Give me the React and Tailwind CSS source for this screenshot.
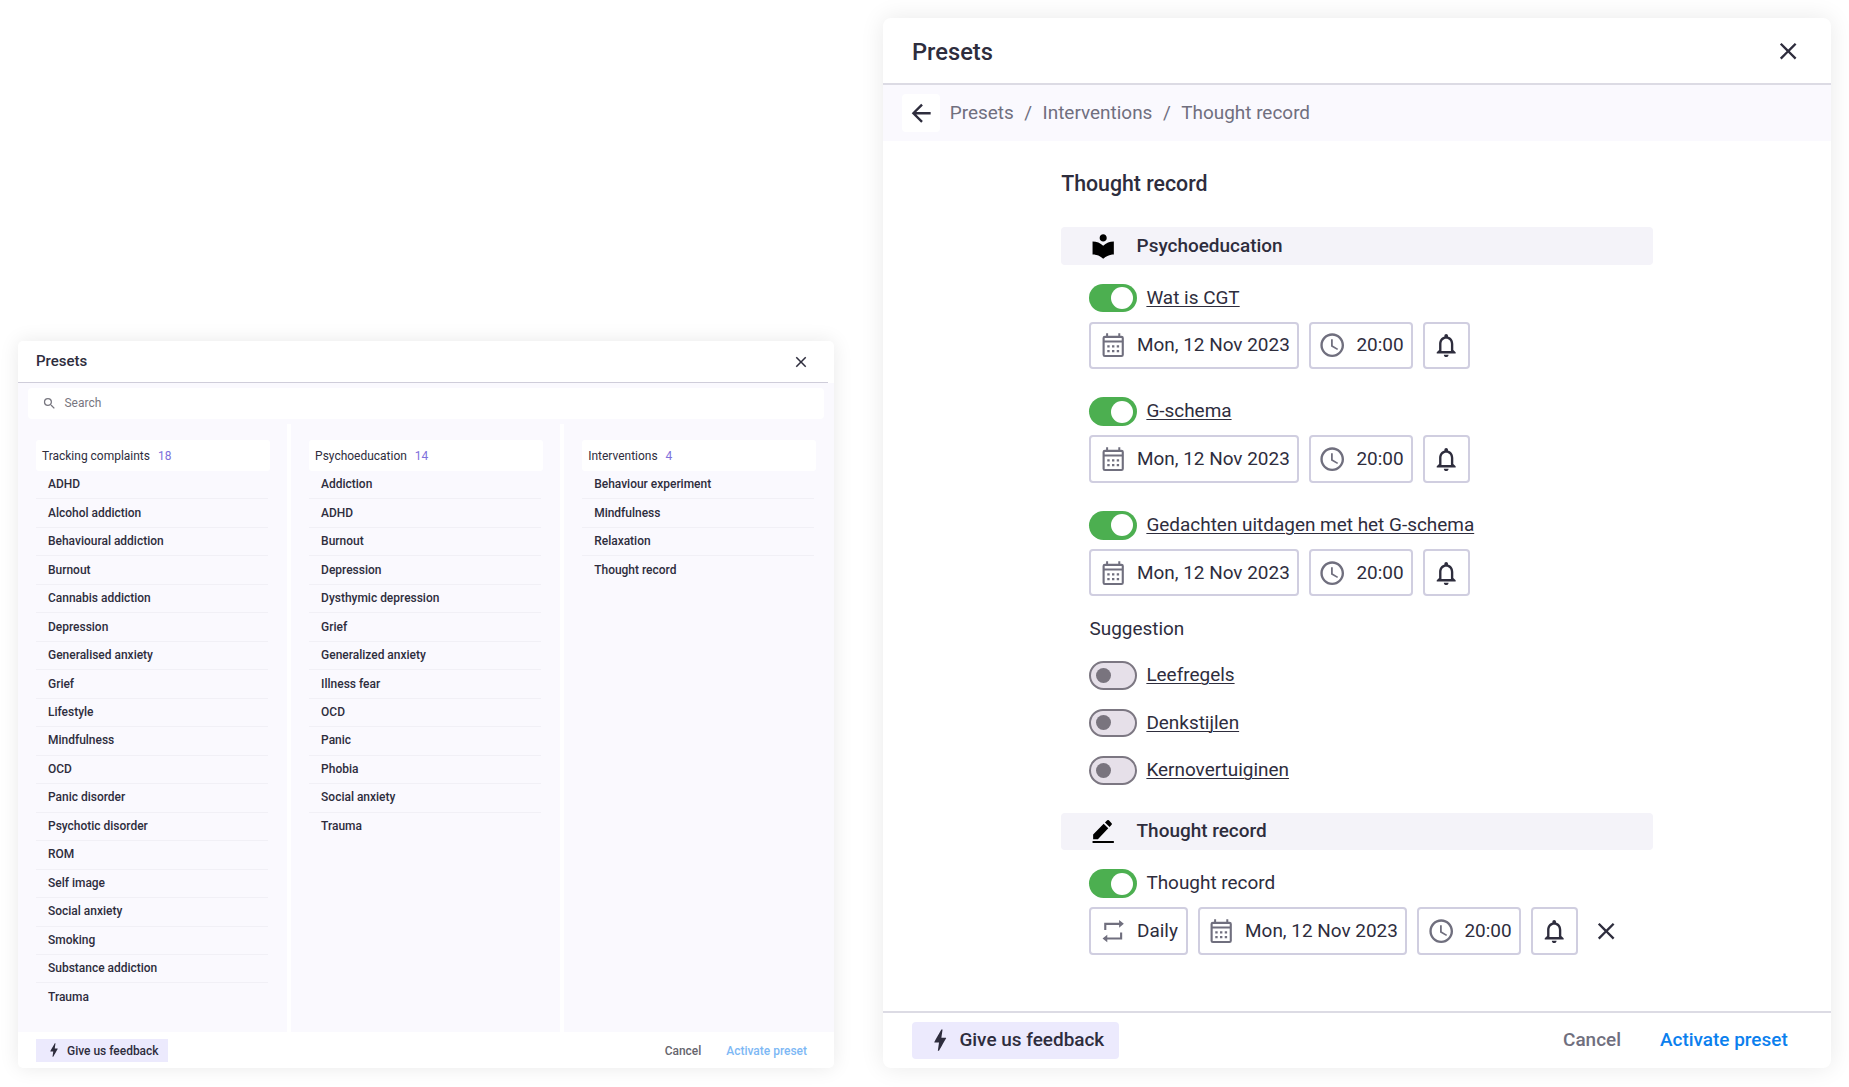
import React, { useState } from "react";
import {
  MdAccessTime,
  MdArrowBack,
  MdBolt,
  MdClose,
  MdLocalLibrary,
  MdNotificationsNone,
  MdSearch,
} from "react-icons/md";

const columns = [
  {
    title: "Tracking complaints",
    count: 18,
    items: [
      "ADHD",
      "Alcohol addiction",
      "Behavioural addiction",
      "Burnout",
      "Cannabis addiction",
      "Depression",
      "Generalised anxiety",
      "Grief",
      "Lifestyle",
      "Mindfulness",
      "OCD",
      "Panic disorder",
      "Psychotic disorder",
      "ROM",
      "Self image",
      "Social anxiety",
      "Smoking",
      "Substance addiction",
      "Trauma",
    ],
  },
  {
    title: "Psychoeducation",
    count: 14,
    items: [
      "Addiction",
      "ADHD",
      "Burnout",
      "Depression",
      "Dysthymic depression",
      "Grief",
      "Generalized anxiety",
      "Illness fear",
      "OCD",
      "Panic",
      "Phobia",
      "Social anxiety",
      "Trauma",
    ],
  },
  {
    title: "Interventions",
    count: 4,
    items: ["Behaviour experiment", "Mindfulness", "Relaxation", "Thought record"],
  },
];

const CalendarIcon = () => (
  <svg viewBox="0 0 24 24" className="size-[28.4px] shrink-0 fill-[#706f7e]">
    <path d="M7 12h2v2H7v-2m14-6v14a2 2 0 0 1-2 2H5a2 2 0 0 1-2-2V6a2 2 0 0 1 2-2h1V2h1.700v2h8.600V2H18v2h1a2 2 0 0 1 2 2M4.800 8h14.400V6H4.800v2m14.400 12.200V9.800H4.800v10.400h14.400M15 14v-2h2v2h-2m-4 0v-2h2v2h-2m-4 2h2v2H7v-2m8 2v-2h2v2h-2m-4 0v-2h2v2h-2Z" />
  </svg>
);

const RepeatIcon = () => (
  <svg viewBox="0 0 24 24" className="size-[28.4px] shrink-0 fill-[#706f7e]">
    <path d="M17 2.600 21 5.800 17 9V6.700H6.200V11H4.400V4.900H17zM7 21.400 3 18.200 7 15v2.300h10.800V13h1.800v6.100H7z" />
  </svg>
);

const PencilIcon = () => (
  <svg viewBox="0 0 24 24" className="size-[28.4px] shrink-0 fill-black">
    <path d="M3 20.200h18V22H3zM3.500 14.800v4h4l8.800-9.200-3.900-3.900zM17.400 8.400l1.700-1.800a1 1 0 0 0 0-1.400l-2.300-2.400a1 1 0 0 0-1.400 0l-1.900 1.800z" />
  </svg>
);

const Toggle = ({ on, onClick }) => (
  <button
    onClick={onClick}
    className={
      on
        ? "flex h-[28.4px] w-[47.4px] items-center justify-end rounded-full bg-[#4caf50] pr-[3.5px]"
        : "flex h-[28.4px] w-[47.4px] items-center rounded-full border-2 border-[#7c7782] bg-[#e6e0e9] pl-[5px]"
    }
  >
    <span className={on ? "size-[22px] rounded-full bg-white" : "size-[15px] rounded-full bg-[#79747e]"} />
  </button>
);

const Field = ({ icon, text, className = "" }) => (
  <div
    className={`flex h-[47.4px] items-center gap-[9.5px] rounded-[4px] border-2 border-[#d0cee0] px-[7.6px] ${className}`}
  >
    {icon}
    {text && <span>{text}</span>}
  </div>
);

const Schedule = ({ daily }) => (
  <div className="mt-[9.5px] flex gap-[9.5px]">
    {daily && <Field icon={<RepeatIcon />} text="Daily" className="w-[98.6px]" />}
    <Field icon={<CalendarIcon />} text="Mon, 12 Nov 2023" />
    <Field icon={<MdAccessTime className="size-[28.4px] text-[#706f7e]" />} text="20:00" />
    <Field icon={<MdNotificationsNone className="size-[28.4px]" />} />
    {daily && (
      <button className="ml-[4.5px] flex items-center">
        <MdClose className="size-[28.4px]" />
      </button>
    )}
  </div>
);

const Item = ({ label, initial = false, link = true, className = "" }) => {
  const [on, setOn] = useState(initial);
  return (
    <div className={`flex h-[28.4px] items-center gap-[9.5px] ${className}`}>
      <Toggle on={on} onClick={() => setOn(!on)} />
      <span className={link ? "underline decoration-1 underline-offset-2" : ""}>{label}</span>
    </div>
  );
};

const SectionBar = ({ icon, title }) => (
  <div className="flex h-[37.6px] items-center gap-[19px] rounded-[4px] bg-[#f4f3f9] pl-[28px] font-medium">
    {icon}
    {title}
  </div>
);

const PresetList = () => (
  <div className="mt-[341px] flex h-[727px] w-[816px] flex-col overflow-hidden rounded-[5px] bg-white text-[11.98px] shadow-[0_0_20px_rgba(0,0,0,0.09)]">
    <header className="mr-[6px] flex h-[42px] shrink-0 items-center justify-between border-b border-[#cfcdda] px-[18px]">
      <h1 className="text-[15px] font-medium">Presets</h1>
      <MdClose className="size-[18px]" />
    </header>
    <div className="h-[41px] shrink-0 bg-[#faf9fe] px-[10px] pt-[5px]">
      <div className="flex h-[31px] items-center gap-[8px] rounded-[4px] bg-white pl-[13.5px] text-[#77767f]">
        <MdSearch className="size-[15px]" />
        Search
      </div>
    </div>
    <div className="flex flex-1 gap-[4.5px]">
      {columns.map((col) => (
        <div key={col.title} className="w-[268.6px] bg-[#faf9fe] pt-[16px] pl-[18px] last:flex-1">
          <div className="flex h-[31px] w-[234px] items-center gap-[8px] rounded-[3px] bg-white pt-[2px] pl-[6px]">
            {col.title}
            <span className="text-[#7f71dc]">{col.count}</span>
          </div>
          {col.items.map((item, i) => (
            <div
              key={item}
              className={`flex h-[28.47px] w-[232px] items-center pt-px pl-[12px] font-medium ${
                i < col.items.length - 1 ? "border-b border-[#f1f0f6]" : ""
              }`}
            >
              {item}
            </div>
          ))}
        </div>
      ))}
    </div>
    <footer className="flex h-[36px] shrink-0 items-center pr-[27px] pl-[18px] font-medium">
      <button className="flex h-[23px] w-[132px] items-center gap-[4px] bg-[#eceafd] pl-[9px]">
        <MdBolt className="size-[18px]" />
        <span className="pt-[3px]">Give us feedback</span>
      </button>
      <button className="mr-[25px] ml-auto pt-[3px] text-[#66656d]">Cancel</button>
      <button className="pt-[3px] text-[#7db8f5]">Activate preset</button>
    </footer>
  </div>
);

const PresetDetail = () => (
  <div className="mt-[18px] flex h-[1050px] w-[948px] flex-col overflow-hidden rounded-[8px] bg-white text-[18.96px] shadow-[0_0_24px_rgba(0,0,0,0.09)]">
    <header className="flex h-[67px] shrink-0 items-center justify-between border-b-2 border-[#dcdbe4] pt-px pr-[28.4px] pl-[28.8px]">
      <h1 className="pt-[3px] text-[23.7px] font-medium">Presets</h1>
      <MdClose className="size-[28.4px]" />
    </header>
    <nav className="flex h-[55.5px] shrink-0 items-center bg-[#faf9fe] pl-[19px] text-[#706f7e]">
      <button className="flex size-[38px] items-center justify-center rounded-[4px] bg-white text-[#2e2d3d]">
        <MdArrowBack className="size-[28.4px]" />
      </button>
      <div className="ml-[9.5px] flex gap-[10.5px] pt-px">
        <span>Presets</span>
        <span>/</span>
        <span>Interventions</span>
        <span>/</span>
        <span>Thought record</span>
      </div>
    </nav>
    <main className="flex-1 pl-[178px]">
      <div className="w-[592px] pt-[27.5px]">
        <h2 className="h-[59px] text-[21.3px] font-medium">Thought record</h2>
        <SectionBar icon={<MdLocalLibrary className="size-[28.4px] text-black" />} title="Psychoeducation" />
        <div className="pl-[28.3px]">
          <Item label="Wat is CGT" initial className="mt-[19.2px]" />
          <Schedule />
          <Item label="G-schema" initial className="mt-[28.4px]" />
          <Schedule />
          <Item label="Gedachten uitdagen met het G-schema" initial className="mt-[28.4px]" />
          <Schedule />
          <p className="mt-[18.5px] h-[28px] leading-[28px]">Suggestion</p>
          <Item label="Leefregels" className="mt-[18.5px]" />
          <Item label="Denkstijlen" className="mt-[19px]" />
          <Item label="Kernovertuiginen" className="mt-[19px]" />
        </div>
        <div className="mt-[28px]">
          <SectionBar icon={<PencilIcon />} title="Thought record" />
        </div>
        <div className="pl-[28.3px]">
          <Item label="Thought record" initial link={false} className="mt-[19.2px]" />
          <Schedule daily />
        </div>
      </div>
    </main>
    <footer className="flex h-[57px] shrink-0 items-center border-t-2 border-[#dcdbe4] pr-[43.5px] pl-[28.8px] font-medium">
      <button className="flex h-[37.6px] w-[207px] items-center gap-[5px] rounded-[4px] bg-[#eceafd] pl-[14px]">
        <MdBolt className="size-[28.4px]" />
        Give us feedback
      </button>
      <button className="mr-[39px] ml-auto text-[#706f7e]">Cancel</button>
      <button className="text-[#0b80ee]">Activate preset</button>
    </footer>
  </div>
);

const App = () => {
  return (
    <div className="flex h-[1087px] w-[1849px] items-start gap-[49.2px] overflow-hidden bg-white pl-[18px] font-['Roboto',sans-serif] text-[#2e2d3d]">
      <PresetList />
      <PresetDetail />
    </div>
  );
};

export default App;
